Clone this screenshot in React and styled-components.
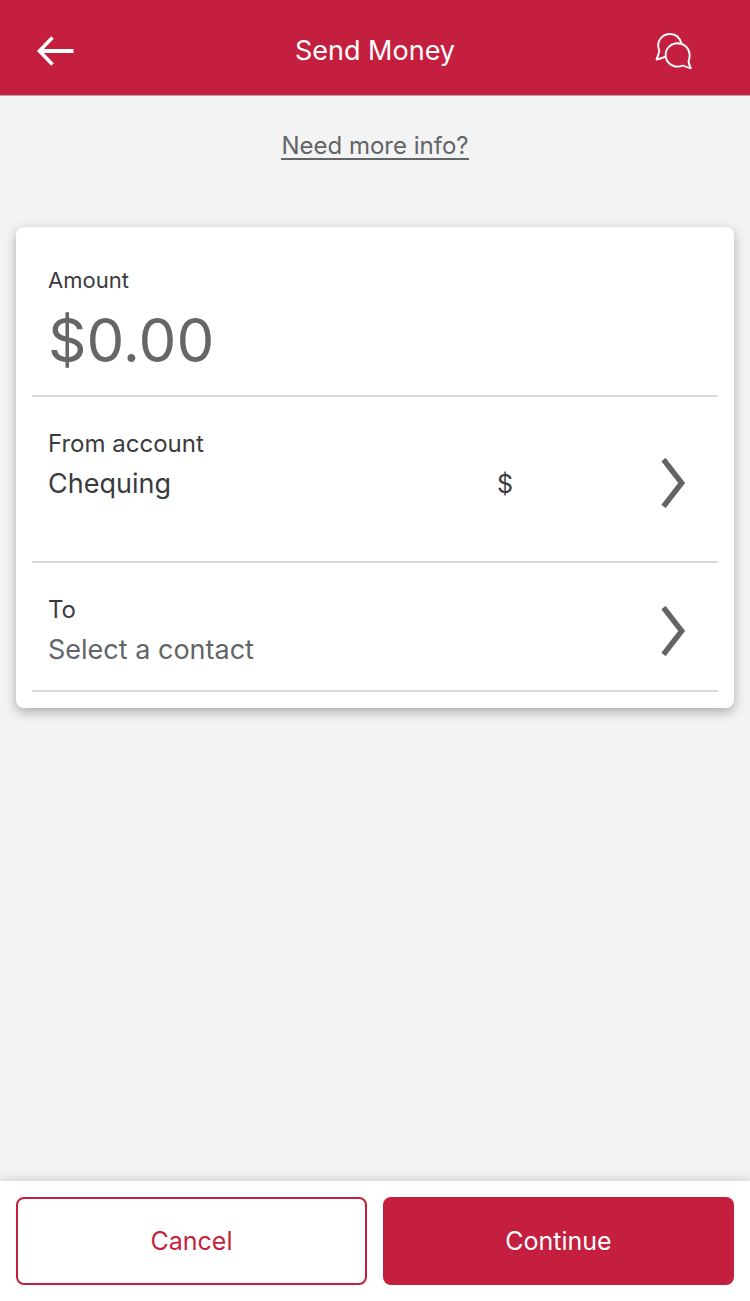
import React from "react";
import styled, { createGlobalStyle } from "styled-components";

const RED = "#c41f3e";
const INK = "#3a3b3e";
const GREY = "#626568";
const RULE = "#d9d9d6";

const GlobalStyle = createGlobalStyle`
  *, *::before, *::after { box-sizing: border-box; }
  body {
    margin: 0;
    background: #f3f3f3;
    color: ${INK};
    font-family: Inter, "Liberation Sans", sans-serif;
  }
  button, input { font: inherit; color: inherit; }
`;

const Screen = styled.div`
  display: flex;
  flex-direction: column;
  min-height: 100vh;
`;

const Header = styled.header`
  display: grid;
  grid-template-columns: 40px 1fr 40px;
  align-items: center;
  height: 96px;
  padding: 6px 56px 0 36px;
  background: ${RED};
  border-bottom: 1px solid #b5a3a7;
`;

const IconButton = styled.button`
  display: flex;
  padding: 0;
  border: 0;
  background: none;
  cursor: pointer;
`;

const Title = styled.h1`
  margin: 0;
  padding-left: 20px;
  color: #fff;
  font-size: 27px;
  font-weight: 400;
  line-height: 40px;
  text-align: center;
`;

const Main = styled.main`
  flex: 1;
  display: flex;
  flex-direction: column;
  padding: 36px 16px 32px;
`;

const InfoLink = styled.a`
  align-self: center;
  margin-bottom: 67px;
  padding-top: 2px;
  border-bottom: 2px solid ${GREY};
  color: ${GREY};
  font-size: 24px;
  line-height: 24px;
  text-decoration: none;
`;

const Card = styled.form`
  padding: 0 16px 16px;
  border-radius: 8px;
  background: #fff;
  box-shadow: 0 4px 12px rgba(0, 0, 0, 0.3);
`;

const AmountField = styled.div`
  display: flex;
  flex-direction: column;
  padding: 37px 16px 12px;
  border-bottom: 2px solid ${RULE};
`;

const AmountLabel = styled.label`
  font-size: 22px;
  line-height: 32px;
`;

const AmountInput = styled.input`
  width: 100%;
  height: 87px;
  padding: 0;
  border: 0;
  outline: 0;
  background: none;
  color: #666;
  font-size: 60px;
`;

const PickerRow = styled.button`
  display: flex;
  align-items: center;
  width: 100%;
  min-height: ${(p) => (p.$tall ? 166 : 129)}px;
  padding: 8px 32px 0 16px;
  border: 0;
  border-bottom: 2px solid ${RULE};
  background: none;
  text-align: left;
  cursor: pointer;
`;

const PickerText = styled.span`
  flex: 1;
  align-self: flex-start;
  display: grid;
  grid-template-columns: 1fr 164px;
  padding: 23px 0 16px;
`;

const PickerLabel = styled.span`
  grid-column: 1 / -1;
  font-size: 24px;
  line-height: 32px;
`;

const PickerValue = styled.span`
  color: ${(p) => (p.$muted ? GREY : INK)};
  font-size: 27px;
  line-height: 48px;
`;

const Balance = styled.span`
  font-size: 25px;
  line-height: 48px;
`;

const Footer = styled.footer`
  display: grid;
  grid-template-columns: 1fr 1fr;
  gap: 16px;
  padding: 16px;
  background: #fff;
  box-shadow: 0 0 12px rgba(0, 0, 0, 0.2);
`;

const ActionButton = styled.button`
  height: 88px;
  border: 2px solid ${RED};
  border-radius: 8px;
  background: ${(p) => (p.$primary ? RED : "#fff")};
  color: ${(p) => (p.$primary ? "#fff" : RED)};
  font-size: 25px;
  cursor: pointer;
`;

const BackIcon = () => (
  <svg width="40" height="32" viewBox="0 0 40 32" fill="none" stroke="#fff" strokeWidth="4" aria-hidden="true">
    <path d="M37.5 16H4" />
    <path d="M16.5 2.5L3.5 16L16.5 29.5" strokeWidth="3.6" />
  </svg>
);

const ChatIcon = () => (
  <svg width="40" height="40" viewBox="0 0 40 40" fill="none" stroke="#fff" strokeWidth="1.9" strokeLinejoin="round" aria-hidden="true">
    <path d="M27.6 12.700C25.800 6.500 21.500 3 16 3C9.300 3 4.200 8 4.200 14.500C4.200 16.500 4.600 18 5.300 19.500C5 22.500 3.800 25.500 2.500 28.500C5.500 28 8.800 27 12 25.400" />
    <path d="M34.500 30.500C35.400 28.500 35.800 26.500 35.600 23.500C35.200 17 30 12.200 23.500 12.200C17 12.200 11.600 17.500 11.600 24C11.600 30.500 17 35.600 23.500 35.600C25.300 35.600 27.200 35.200 28.700 34.500C31.500 35.700 34 36.700 36.800 37.200C35.700 35 34.800 32.700 34.500 30.500Z" />
  </svg>
);

const ChevronIcon = () => (
  <svg width="25" height="50" viewBox="0 0 25 50" fill="none" stroke={GREY} strokeWidth="5.4" aria-hidden="true">
    <path d="M2.500 1.500L20.700 25L2.500 48.500" />
  </svg>
);

function Picker({ label, value, balance, muted, tall }) {
  return (
    <PickerRow type="button" $tall={tall}>
      <PickerText>
        <PickerLabel>{label}</PickerLabel>
        <PickerValue $muted={muted}>{value}</PickerValue>
        {balance && <Balance>{balance}</Balance>}
      </PickerText>
      <ChevronIcon />
    </PickerRow>
  );
}

export default function App() {
  return (
    <Screen>
      <GlobalStyle />
      <Header>
        <IconButton type="button" aria-label="Back">
          <BackIcon />
        </IconButton>
        <Title>Send Money</Title>
        <IconButton type="button" aria-label="Chat">
          <ChatIcon />
        </IconButton>
      </Header>
      <Main>
        <InfoLink href="#info">Need more info?</InfoLink>
        <Card id="transfer">
          <AmountField>
            <AmountLabel htmlFor="amount">Amount</AmountLabel>
            <AmountInput id="amount" inputMode="decimal" defaultValue="$0.00" />
          </AmountField>
          <Picker label="From account" value="Chequing" balance="$" tall />
          <Picker label="To" value="Select a contact" muted />
        </Card>
      </Main>
      <Footer>
        <ActionButton type="button">Cancel</ActionButton>
        <ActionButton type="submit" form="transfer" $primary>
          Continue
        </ActionButton>
      </Footer>
    </Screen>
  );
}
